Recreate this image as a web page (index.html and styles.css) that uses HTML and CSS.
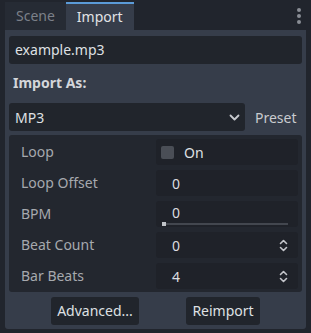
FILE: index.html
```html
<!DOCTYPE html>
<html lang="en">
<head>
    <meta charset="UTF-8">
    <title>Import</title>
    <link rel="stylesheet" href="styles.css">
</head>
<body>
    <div class="tab-bar">
        <div class="tab">Scene</div>
        <div class="tab active">Import</div>
        <div class="menu-dots">
            <span></span><span></span><span></span>
        </div>
    </div>

    <div class="panel">
        <div class="file-field">example.mp3</div>

        <div class="section-label">Import As:</div>

        <div class="select-row">
            <div class="select">
                <span>MP3</span>
                <svg width="11" height="7" viewBox="0 0 11 7"><path d="M1.5 1.5 L5.5 5.5 L9.5 1.5" fill="none" stroke="#c8cacf" stroke-width="1.8" stroke-linecap="round" stroke-linejoin="round"/></svg>
            </div>
            <div class="preset">Preset</div>
        </div>

        <div class="inspector">
            <div class="prop-row">
                <div class="prop-label">Loop</div>
                <div class="prop-value">
                    <span class="checkbox"></span>
                    <span class="check-text">On</span>
                </div>
            </div>
            <div class="prop-row">
                <div class="prop-label">Loop Offset</div>
                <div class="prop-value"><span class="num">0</span></div>
            </div>
            <div class="prop-row">
                <div class="prop-label">BPM</div>
                <div class="prop-value slider">
                    <span class="num">0</span>
                    <div class="slider-track"><span class="slider-grabber"></span></div>
                </div>
            </div>
            <div class="prop-row">
                <div class="prop-label">Beat Count</div>
                <div class="prop-value">
                    <span class="num">0</span>
                    <svg class="spin" width="9" height="13" viewBox="0 0 9 13"><path d="M1.5 4.5 L4.5 1.5 L7.5 4.5 M1.5 8.5 L4.5 11.5 L7.5 8.5" fill="none" stroke="#c4c6cb" stroke-width="1.6" stroke-linecap="round" stroke-linejoin="round"/></svg>
                </div>
            </div>
            <div class="prop-row">
                <div class="prop-label">Bar Beats</div>
                <div class="prop-value">
                    <span class="num">4</span>
                    <svg class="spin" width="9" height="13" viewBox="0 0 9 13"><path d="M1.5 4.5 L4.5 1.5 L7.5 4.5 M1.5 8.5 L4.5 11.5 L7.5 8.5" fill="none" stroke="#c4c6cb" stroke-width="1.6" stroke-linecap="round" stroke-linejoin="round"/></svg>
                </div>
            </div>
        </div>

        <div class="button-row">
            <div class="btn btn-advanced">Advanced...</div>
            <div class="btn btn-reimport">Reimport</div>
        </div>
    </div>
</body>
</html>
```

FILE: styles.css
```css
body {
    margin: 0;
    width: 311px;
    height: 333px;
    background-color: #21252d;
    font-family: "Noto Sans", sans-serif;
    font-size: 14px;
    color: #dfe0e3;
    overflow: hidden;
}

.tab-bar {
    display: flex;
    align-items: flex-end;
    height: 30px;
    padding-left: 5px;
}

.tab {
    height: 28px;
    line-height: 28px;
    padding: 0 11px;
    background-color: #262b34;
    color: #7c8089;
    box-sizing: border-box;
}

.tab.active {
    background-color: #363d4a;
    color: #e2e3e6;
    border-top: 2px solid #5b9bd8;
    line-height: 25px;
    width: 68px;
}

.menu-dots {
    margin-left: auto;
    margin-right: 10px;
    align-self: flex-start;
    padding-top: 8px;
    display: flex;
    flex-direction: column;
    gap: 2px;
}

.menu-dots span {
    width: 4px;
    height: 4px;
    border-radius: 50%;
    background-color: #8a8e95;
}

.panel {
    margin: 0 5px;
    height: 299px;
    padding: 6px 4px 0 4px;
    box-sizing: border-box;
    background-color: #363d4a;
    border-radius: 0 0 3px 3px;
}

.file-field {
    height: 28px;
    line-height: 28px;
    padding-left: 6px;
    background-color: #21252c;
    border-radius: 3px;
}

.section-label {
    height: 39px;
    line-height: 38px;
    padding-left: 4px;
    font-weight: bold;
    color: #d4d6da;
}

.select-row {
    display: flex;
    align-items: center;
}

.select {
    width: 236px;
    height: 28px;
    display: flex;
    align-items: center;
    justify-content: space-between;
    padding: 0 5px 0 6px;
    box-sizing: border-box;
    background-color: #21252c;
    border-radius: 3px;
}

.preset {
    margin-left: 10px;
    color: #c9cbcf;
}

.inspector {
    margin-top: 4px;
    padding: 4px;
    height: 157px;
    box-sizing: border-box;
    background-color: #23272f;
    border-radius: 3px;
    display: flex;
    flex-direction: column;
    gap: 5px;
}

.prop-row {
    display: flex;
    height: 26px;
}

.prop-label {
    width: 143px;
    box-sizing: border-box;
    padding-left: 8px;
    line-height: 26px;
    color: #a6a9ae;
}

.prop-value {
    flex: 1;
    position: relative;
    display: flex;
    align-items: center;
    background-color: #1f2229;
    border-radius: 3px;
    padding: 0 10px 0 16px;
}

.checkbox {
    width: 13px;
    height: 13px;
    margin-left: -11px;
    border-radius: 2px;
    background-color: #4a4e56;
}

.check-text {
    margin-left: 10px;
    color: #dfe0e3;
}

.num {
    color: #dcdde0;
}

.spin {
    margin-left: auto;
}

.slider .num {
    margin-top: -4px;
}

.slider-track {
    position: absolute;
    left: 6px;
    right: 10px;
    bottom: 2px;
    height: 2px;
    background-color: #43474f;
}

.slider-grabber {
    position: absolute;
    left: 0;
    top: -1px;
    width: 4px;
    height: 4px;
    background-color: #c0c3c8;
}

.button-row {
    display: flex;
    justify-content: center;
    gap: 47px;
    margin-top: 5px;
}

.btn {
    height: 28px;
    line-height: 28px;
    text-align: center;
    background-color: #21252c;
    border-radius: 3px;
    color: #dfe0e3;
}

.btn-advanced {
    width: 88px;
}

.btn-reimport {
    width: 74px;
}
```
